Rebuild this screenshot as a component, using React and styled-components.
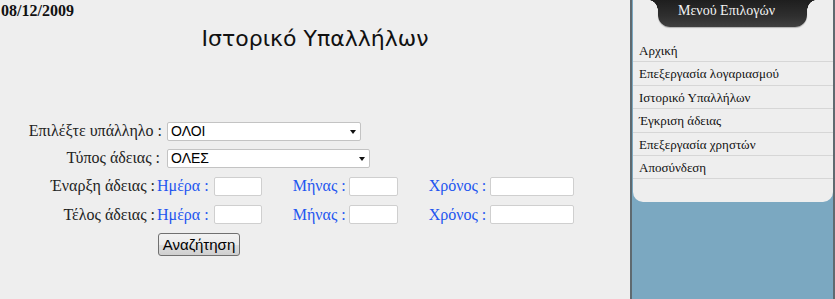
import React from "react";
import styled, { createGlobalStyle } from "styled-components";

const GlobalStyle = createGlobalStyle`
  html, body {
    margin: 0;
    padding: 0;
    background: #eeeeee;
  }
`;

const Page = styled.div`
  display: grid;
  grid-template-columns: 630px 205px;
  width: 835px;
  height: 299px;
  overflow: hidden;
`;

const Main = styled.div`
  display: flex;
  flex-direction: column;
  background: #eeeeee;
`;

const DateLine = styled.div`
  font-family: "Liberation Serif", serif;
  font-weight: bold;
  font-size: 16px;
  line-height: 18px;
  padding: 2px 0 0 1px;
  color: #111;
`;

const Title = styled.h1`
  margin: 5px 0 0;
  text-align: center;
  font-family: "DejaVu Sans", Verdana, sans-serif;
  font-weight: normal;
  font-size: 22px;
  line-height: 28px;
  color: #111;
`;

const Form = styled.div`
  display: flex;
  flex-direction: column;
  margin-top: 65px;
`;

const Row = styled.div`
  display: flex;
  align-items: center;
  height: ${(p) => p.$h || 28}px;
`;

const Label = styled.span`
  width: ${(p) => p.$w}px;
  flex: none;
  text-align: right;
  padding-right: ${(p) => p.$gap || 0}px;
  font-family: "Liberation Serif", serif;
  font-size: 16px;
  color: #222;
  white-space: nowrap;
`;

const Field = styled.span`
  display: flex;
  align-items: center;
  margin-right: ${(p) => p.$after || 0}px;
  font-family: "Liberation Serif", serif;
  font-size: 16px;
  color: #2255f0;
  white-space: nowrap;
`;

const SmallInput = styled.input`
  box-sizing: border-box;
  width: ${(p) => p.$w}px;
  height: 19px;
  margin-left: ${(p) => p.$gap || 4}px;
  border: 1px solid #cfcfcf;
  border-radius: 2px;
  background: #fff;
  padding: 0 2px;
  outline: none;
`;

const SelectWrap = styled.span`
  position: relative;
  display: inline-block;
  width: ${(p) => p.$w}px;
  height: 19px;

  &::after {
    content: "";
    position: absolute;
    right: 5px;
    top: 8px;
    border-left: 3.5px solid transparent;
    border-right: 3.5px solid transparent;
    border-top: 4px solid #111;
    pointer-events: none;
  }
`;

const Select = styled.select`
  appearance: none;
  box-sizing: border-box;
  width: 100%;
  height: 19px;
  border: 1px solid #c3c3c3;
  border-radius: 2px;
  background: #fff;
  padding: 0 0 0 3px;
  font-family: "Liberation Sans", Arial, sans-serif;
  font-size: 14px;
  color: #000;
  outline: none;
`;

const ButtonRow = styled.div`
  display: flex;
  padding-left: 158px;
  margin-top: 4px;
`;

const SearchButton = styled.button`
  box-sizing: border-box;
  width: 82px;
  height: 23px;
  padding: 0;
  border: 1px solid #707070;
  border-radius: 3px;
  background: linear-gradient(#f2f2f2, #ebebeb 50%, #dddddd 51%, #cfcfcf);
  font-family: "Liberation Sans", Arial, sans-serif;
  font-size: 15px;
  color: #000;
`;

const Sidebar = styled.div`
  box-sizing: border-box;
  border-left: 2px solid #5f6a70;
  border-right: 2px solid #5f6a70;
  background: #7ba8c1;
  padding: 0 0 0 1px;
`;

const MenuPanel = styled.div`
  display: flex;
  flex-direction: column;
  background: #eeeeee;
  border-radius: 0 0 10px 10px;
  padding-bottom: 23px;
`;

const MenuTab = styled.div`
  position: relative;
  box-sizing: border-box;
  align-self: flex-start;
  margin-left: 25px;
  width: 149px;
  height: 27px;
  padding: 2px 0 0 20px;
  background: linear-gradient(#1e1e1e, #2f2f2f 60%, #404040);
  border-radius: 0 0 12px 12px;
  box-shadow: 0 1px 1px rgba(0, 0, 0, 0.25);
  font-family: "Liberation Serif", serif;
  font-size: 14px;
  line-height: 18px;
  color: #f4f4f4;

  &::before,
  &::after {
    content: "";
    position: absolute;
    top: 0;
    width: 9px;
    height: 11px;
  }
  &::before {
    left: -9px;
    background: radial-gradient(ellipse 9px 11px at 0 100%, transparent 96%, #1f1f1f 100%);
  }
  &::after {
    right: -9px;
    background: radial-gradient(ellipse 9px 11px at 100% 100%, transparent 96%, #1f1f1f 100%);
  }
`;

const MenuList = styled.ul`
  list-style: none;
  margin: 12px 0 0;
  padding: 0;
`;

const MenuItem = styled.li`
  box-sizing: border-box;
  height: 23.4px;
  padding-left: 6px;
  border-bottom: 1px solid #d6d6d6;
  font-family: "Liberation Serif", serif;
  font-size: 13px;
  line-height: 23px;
  color: #111;
`;

const menu = [
  "Αρχική",
  "Επεξεργασία λογαριασμού",
  "Ιστορικό Υπαλλήλων",
  "Έγκριση άδειας",
  "Επεξεργασία χρηστών",
  "Αποσύνδεση",
];

function DateRow({ label, h }) {
  return (
    <Row $h={h}>
      <Label $w={155} $gap={2}>{label}</Label>
      <Field $after={31}>
        Ημέρα :<SmallInput $w={48} $gap={5} />
      </Field>
      <Field $after={31}>
        Μήνας :<SmallInput $w={49} $gap={3} />
      </Field>
      <Field>
        Χρόνος :<SmallInput $w={84} $gap={4} />
      </Field>
    </Row>
  );
}

export default function App() {
  return (
    <Page>
      <GlobalStyle />
      <Main>
        <DateLine>08/12/2009</DateLine>
        <Title>Ιστορικό Υπαλλήλων</Title>
        <Form>
          <Row $h={26}>
            <Label $w={162} $gap={5}>Επιλέξτε υπάλληλο :</Label>
            <SelectWrap $w={194}>
              <Select defaultValue="all">
                <option value="all">ΟΛΟΙ</option>
              </Select>
            </SelectWrap>
          </Row>
          <Row $h={28}>
            <Label $w={160} $gap={7}>Τύπος άδειας :</Label>
            <SelectWrap $w={203}>
              <Select defaultValue="all">
                <option value="all">ΟΛΕΣ</option>
              </Select>
            </SelectWrap>
          </Row>
          <DateRow label="Έναρξη άδειας :" h={28} />
          <DateRow label="Τέλος άδειας :" h={29} />
          <ButtonRow>
            <SearchButton>Αναζήτηση</SearchButton>
          </ButtonRow>
        </Form>
      </Main>
      <Sidebar>
        <MenuPanel>
          <MenuTab>Μενού Επιλογών</MenuTab>
          <MenuList>
            {menu.map((item) => (
              <MenuItem key={item}>{item}</MenuItem>
            ))}
          </MenuList>
        </MenuPanel>
      </Sidebar>
    </Page>
  );
}
